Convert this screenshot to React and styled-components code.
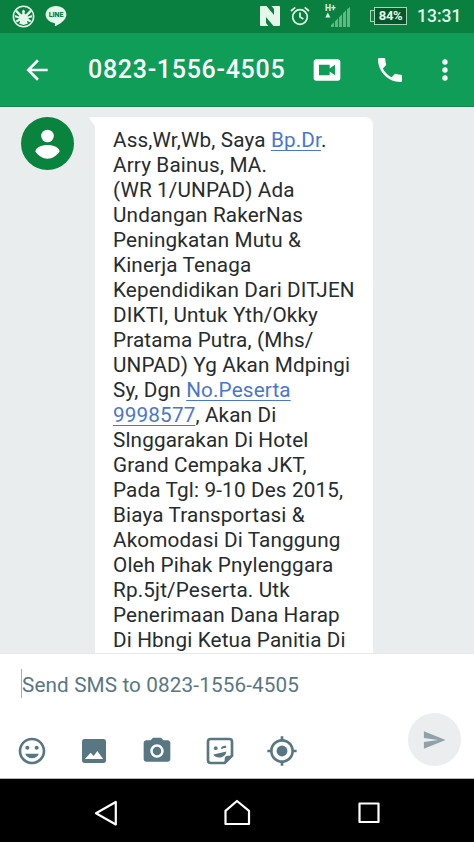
import React from 'react'
import styled, { ThemeProvider, createGlobalStyle } from 'styled-components'

const theme = {
    statusBar: '#09803f',
    appBar: '#0f9d58',
    avatar: '#0a833e',
    canvas: '#e9edee',
    white: '#ffffff',
    ink: '#262c2e',
    slate: '#587783',
    link: '#4a77cc'
}

const GlobalStyle = createGlobalStyle`
    * {
        box-sizing: border-box;
    }

    body {
        margin: 0;
        font-family: Roboto, 'Liberation Sans', sans-serif;
    }
`

const Screen = styled.div`
    display: flex;
    flex-direction: column;
    width: 474px;
    height: 842px;
    overflow: hidden;
    background: ${props => props.theme.canvas};
`

const Icon = styled.svg`
    display: block;
    flex: none;
    width: ${props => props.$w || 32}px;
    height: ${props => props.$h || props.$w || 32}px;
    overflow: visible;
    fill: currentColor;
`

const StatusBar = styled.div`
    flex: none;
    display: flex;
    justify-content: space-between;
    height: 33px;
    padding: 4px 12px 0;
    color: #e4f7ea;
    background: ${props => props.theme.statusBar};
`

const StatusGroup = styled.div`
    display: flex;
    align-items: center;
    height: 24px;
    gap: 10px;
`

const LineBadge = styled.div`
    display: grid;
    width: 22px;
    height: 22px;

    > * {
        grid-area: 1 / 1;
    }

    span {
        padding-top: 6px;
        color: ${props => props.theme.statusBar};
        font-size: 7px;
        font-weight: 900;
        line-height: 8px;
        text-align: center;
    }
`

const Network = styled.div`
    display: flex;
    width: 26px;
    height: 24px;
    margin-left: 5px;
`

const NetworkType = styled.div`
    width: 5px;
    height: 24px;
    font-size: 8.5px;
    font-weight: 700;
    line-height: 8px;
    white-space: nowrap;
`

const Battery = styled.div`
    display: flex;
    align-items: center;
    margin-left: 9px;

    &::before {
        content: '';
        width: 3px;
        height: 10px;
        border: 1px solid #a9d6b8;
        border-right: 0;
    }
`

const BatteryLevel = styled.div`
    width: 33px;
    height: 18px;
    border: 1px solid #a9d6b8;
    background: #05572a;
    font-size: 13px;
    font-weight: 700;
    line-height: 16px;
    letter-spacing: -0.4px;
    text-align: center;
`

const Clock = styled.div`
    width: 45px;
    font-size: 17.5px;
    font-weight: 500;
    line-height: 24px;
    white-space: nowrap;
`

const AppBar = styled.header`
    flex: none;
    display: flex;
    align-items: center;
    height: 74px;
    padding: 0 13px 0 21px;
    color: ${props => props.theme.white};
    background: ${props => props.theme.appBar};
    border-bottom: 1px solid #178650;
`

const Title = styled.h1`
    flex: 1;
    margin: 0 0 0 35px;
    font-size: 25px;
    font-weight: 500;
    line-height: 32px;
    letter-spacing: 0.7px;
    white-space: nowrap;
`

const Actions = styled.div`
    display: grid;
    grid-template-columns: 63px 55px 32px;
`

const Conversation = styled.main`
    flex: 1;
    display: flex;
    align-items: flex-start;
    min-height: 0;
    overflow: hidden;
    padding: 10px 0 0 21px;
`

const Avatar = styled.div`
    flex: none;
    width: 53px;
    height: 53px;
    border-radius: 50%;
    color: ${props => props.theme.white};
    background: ${props => props.theme.avatar};
`

const Tail = styled(Icon)`
    margin-left: 15px;
    color: ${props => props.theme.white};
`

const Bubble = styled.div`
    width: 278px;
    height: 560px;
    padding: 11px 0 0 18px;
    border-radius: 0 8px 0 0;
    color: ${props => props.theme.ink};
    background: ${props => props.theme.white};
    font-size: 20.7px;
    line-height: 25px;
    letter-spacing: 0.15px;
    white-space: pre;
`

const Link = styled.span`
    color: ${props => props.theme.link};
    text-decoration: underline;
    text-decoration-thickness: 1px;
    text-underline-offset: 3px;
    text-decoration-skip-ink: none;
`

const Composer = styled.footer`
    flex: none;
    display: flex;
    justify-content: space-between;
    height: 126px;
    padding: 15px 13px 0 15.5px;
    color: ${props => props.theme.slate};
    background: ${props => props.theme.white};
    border-top: 1px solid #e6e9ea;
    border-bottom: 1px solid #b5b5b5;
`

const Field = styled.div`
    height: 29px;
    margin: 0 0 37px 5.5px;
    border-left: 1px solid #9fb0b7;
    font-size: 20.7px;
    line-height: 32px;
    letter-spacing: 0.13px;
    white-space: nowrap;
`

const Attachments = styled.div`
    display: flex;
    gap: 30.7px;
`

const Send = styled.div`
    display: grid;
    place-items: center;
    width: 53px;
    height: 53px;
    margin-top: 44px;
    border-radius: 50%;
    color: #8fa1a9;
    background: #ebedee;
`

const NavBar = styled.nav`
    flex: none;
    display: grid;
    grid-template-columns: 211px 52px 211px;
    justify-items: center;
    height: 63px;
    padding-top: 18px;
    background: #000;
`

const message = [
    ['Ass,Wr,Wb, Saya ', { link: 'Bp.Dr' }, '.'],
    ['Arry Bainus, MA.'],
    ['(WR 1/UNPAD) Ada'],
    ['Undangan RakerNas'],
    ['Peningkatan Mutu &'],
    ['Kinerja Tenaga'],
    ['Kependidikan Dari DITJEN'],
    ['DIKTI, Untuk Yth/Okky'],
    ['Pratama Putra, (Mhs/'],
    ['UNPAD) Yg Akan Mdpingi'],
    ['Sy, Dgn ', { link: 'No.Peserta' }],
    [{ link: '9998577' }, ', Akan Di'],
    ['Slnggarakan Di Hotel'],
    ['Grand Cempaka JKT,'],
    ['Pada Tgl: 9-10 Des 2015,'],
    ['Biaya Transportasi &'],
    ['Akomodasi Di Tanggung'],
    ['Oleh Pihak Pnylenggara'],
    ['Rp.5jt/Peserta. Utk'],
    ['Penerimaan Dana Harap'],
    ['Di Hbngi Ketua Panitia Di']
]

const Status = () => (
    <StatusBar>
        <StatusGroup>
            <Icon $w={23} viewBox="0 0 24 24">
                <circle cx="12" cy="12" r="10.6" fill="none" stroke="currentColor" strokeWidth="1.6" />
                <path d="M12 4.800l1.700 1.600-.7 2.300 1.200 1.300 4.800-5 1.500 2-4.300 4.400.5.500 4.300-1.400.1 2.200-4 1 .2.800 2.800 1.800-1.100 1.900-2.700-1.600-.7.600 1 2.200L12 20.800l-4.600-1.400 1-2.200-.7-.6L5 18.200l-1.100-1.900 2.800-1.800.2-.8-4-1 .1-2.200 4.300 1.400.5-.5L3.500 7 5 5l4.800 5L11 8.700l-.7-2.300z" />
            </Icon>
            <LineBadge>
                <Icon $w={22} viewBox="0 0 22 22">
                    <path d="M11 1C5 1 .6 4.900.6 9.600c0 4.300 3.600 7.700 8.400 8.400 1.500.3 1 1.300.8 2.500-.1.700.3.900.9.600 3.500-1.700 10.700-5.700 10.700-11.500C21.400 4.900 17 1 11 1z" />
                </Icon>
                <span>LINE</span>
            </LineBadge>
        </StatusGroup>
        <StatusGroup>
            <Icon $w={20} $h={22} viewBox="1 0 20 22">
                <path
                    fillRule="evenodd"
                    d="M2 1h5.500L15 10V4l-2.500-3H20q1 0 1 1v18q0 1-1 1h-5.500L7 12v6l2.500 3H2q-1 0-1-1V2q0-1 1-1z"
                />
            </Icon>
            <Icon $w={20} viewBox="0 0 20 20">
                <g fill="none" stroke="currentColor" strokeWidth="1.7">
                    <circle cx="10" cy="11" r="7.3" />
                    <path d="M10 6.500V11l3.400 2M1 5l4.300-3.600M19 5l-4.300-3.600" />
                </g>
            </Icon>
            <Network>
                <NetworkType>H+</NetworkType>
                <Icon $w={21} $h={24} viewBox="0 0 21 24">
                    <path d="M.3 13.500h-5l2.500-5z" />
                    <g fill="#62b782">
                        <path d="M1 23v-2l3-2.800V23zM5 23v-5.800l3-3V23zM9 23v-9.800l3-3V23zM13 23V9.200l3-3V23zM17 23V5.200l3-2.200v20z" />
                    </g>
                </Icon>
            </Network>
            <Battery>
                <BatteryLevel>84%</BatteryLevel>
            </Battery>
            <Clock>13:31</Clock>
        </StatusGroup>
    </StatusBar>
)

const ComposerIcons = () => (
    <Attachments>
        <Icon viewBox="0 0 24 24">
            <path d="M11.990 2C6.470 2 2 6.480 2 12s4.470 10 9.990 10C17.520 22 22 17.520 22 12S17.520 2 11.990 2zM12 20c-4.420 0-8-3.580-8-8s3.580-8 8-8 8 3.580 8 8-3.580 8-8 8zm3.500-9c.83 0 1.500-.67 1.500-1.500S16.330 8 15.500 8 14 8.670 14 9.500s.67 1.500 1.500 1.500zm-7 0c.83 0 1.500-.67 1.500-1.500S9.330 8 8.500 8 7 8.670 7 9.500 7.670 11 8.500 11zm3.500 6.500c2.330 0 4.310-1.460 5.110-3.500H6.890c.8 2.040 2.780 3.500 5.110 3.500z" />
        </Icon>
        <Icon viewBox="0 0 24 24">
            <path fillRule="evenodd" d="M5 3h14a2 2 0 0 1 2 2v14a2 2 0 0 1-2 2H5a2 2 0 0 1-2-2V5a2 2 0 0 1 2-2zm.2 15h13.600l-4.300-6-2.800 3.700-2.200-2.300z" />
        </Icon>
        <Icon viewBox="0 0 24 24">
            <circle cx="12" cy="12" r="3.2" />
            <path d="M9 2L7.170 4H4c-1.100 0-2 .9-2 2v12c0 1.100.9 2 2 2h16c1.100 0 2-.9 2-2V6c0-1.100-.9-2-2-2h-3.170L15 2H9zm3 15c-2.760 0-5-2.240-5-5s2.240-5 5-5 5 2.240 5 5-2.240 5-5 5z" />
        </Icon>
        <Icon viewBox="0 0 24 24">
            <path
                d="M5 3h14a2 2 0 0 1 2 2v10.500L15.500 21H5a2 2 0 0 1-2-2V5a2 2 0 0 1 2-2z"
                fill="none"
                stroke="currentColor"
                strokeWidth="2"
            />
            <path d="M21.500 15.500H18a2.500 2.500 0 0 0-2.500 2.500v3.500zM7 14.700l9.800-2.400c-.2 2-1.700 3.900-4.100 4.500-2.400.5-4.600-.4-5.700-2.100z" />
            <circle cx="8.8" cy="9.9" r="1.4" />
            <path d="M12.600 9.900c.7-1.500 2.700-2.300 4.200-1.400l-.5 1.500c-1-.6-2-.3-2.800.7z" />
        </Icon>
        <Icon viewBox="0 0 24 24">
            <circle cx="12" cy="12" r="4.1" />
            <path d="M20.940 11c-.46-4.170-3.770-7.480-7.940-7.940V1h-2v2.060C6.830 3.520 3.520 6.830 3.060 11H1v2h2.060c.46 4.170 3.770 7.480 7.940 7.940V23h2v-2.060c4.170-.46 7.480-3.770 7.940-7.940H23v-2h-2.060zM12 19c-3.870 0-7-3.130-7-7s3.130-7 7-7 7 3.130 7 7-3.130 7-7 7z" />
        </Icon>
    </Attachments>
)

const App = () => (
    <ThemeProvider theme={theme}>
        <GlobalStyle />
        <Screen>
            <Status />
            <AppBar>
                <Icon viewBox="0 0 24 24">
                    <path d="M20 11H7.830l5.590-5.590L12 4l-8 8 8 8 1.410-1.410L7.830 13H20v-2z" />
                </Icon>
                <Title>0823-1556-4505</Title>
                <Actions>
                    <Icon viewBox="0 0 24 24">
                        <path fillRule="evenodd" d="M4 4h16a2 2 0 0 1 2 2v12a2 2 0 0 1-2 2H4a2 2 0 0 1-2-2V6a2 2 0 0 1 2-2zm2 4v8h8v-2.800l4 2.800V8l-4 2.800V8z" />
                    </Icon>
                    <Icon viewBox="0 0 24 24">
                        <path d="M6.620 10.790c1.440 2.830 3.760 5.140 6.590 6.590l2.200-2.200c.27-.27.67-.36 1.020-.24 1.120.37 2.330.57 3.570.57.55 0 1 .45 1 1V20c0 .55-.45 1-1 1-9.390 0-17-7.610-17-17 0-.55.45-1 1-1h3.500c.55 0 1 .45 1 1 0 1.250.2 2.450.57 3.570.11.35.03.74-.25 1.020l-2.200 2.200z" />
                    </Icon>
                    <Icon viewBox="0 0 24 24">
                        <circle cx="12" cy="6" r="2" />
                        <circle cx="12" cy="12" r="2" />
                        <circle cx="12" cy="18" r="2" />
                    </Icon>
                </Actions>
            </AppBar>
            <Conversation>
                <Avatar>
                    <Icon $w={53} viewBox="0 0 53 53">
                        <circle cx="26.5" cy="19" r="6.3" />
                        <path d="M14.500 34.500c0-4 6-6.500 12-6.500s12 2.500 12 6.500c-2.500 4-7 7.200-12 7.200s-9.500-3.200-12-7.200z" />
                    </Icon>
                </Avatar>
                <Tail $w={6} $h={10} viewBox="0 0 6 10">
                    <path d="M1 0h5v9.500L.5 1.500Q0 .3 1 0z" />
                </Tail>
                <Bubble>
                    {message.map((line, i) => (
                        <div key={i}>
                            {line.map((part, j) =>
                                typeof part === 'string' ? part : <Link key={j}>{part.link}</Link>
                            )}
                        </div>
                    ))}
                </Bubble>
            </Conversation>
            <Composer>
                <div>
                    <Field>Send SMS to 0823-1556-4505</Field>
                    <ComposerIcons />
                </div>
                <Send>
                    <Icon $w={28} viewBox="0 0 24 24">
                        <path d="M2.500 4.500v5.800L15 12 2.500 13.700v5.800L21 12z" />
                    </Icon>
                </Send>
            </Composer>
            <NavBar>
                <Icon viewBox="0 0 32 32">
                    <path d="M25.800 5v22.500L6 16.200z" fill="none" stroke="#fff" strokeWidth="2.2" strokeLinejoin="round" />
                </Icon>
                <Icon viewBox="0 0 32 32">
                    <path d="M4.500 27V13.800L16 4l12 9.800V27z" fill="none" stroke="#fff" strokeWidth="2.2" strokeLinejoin="round" />
                </Icon>
                <Icon viewBox="0 0 32 32">
                    <path d="M6.500 6.500h19v18.500h-19z" fill="none" stroke="#fff" strokeWidth="2.2" strokeLinejoin="round" />
                </Icon>
            </NavBar>
        </Screen>
    </ThemeProvider>
)

export default App
